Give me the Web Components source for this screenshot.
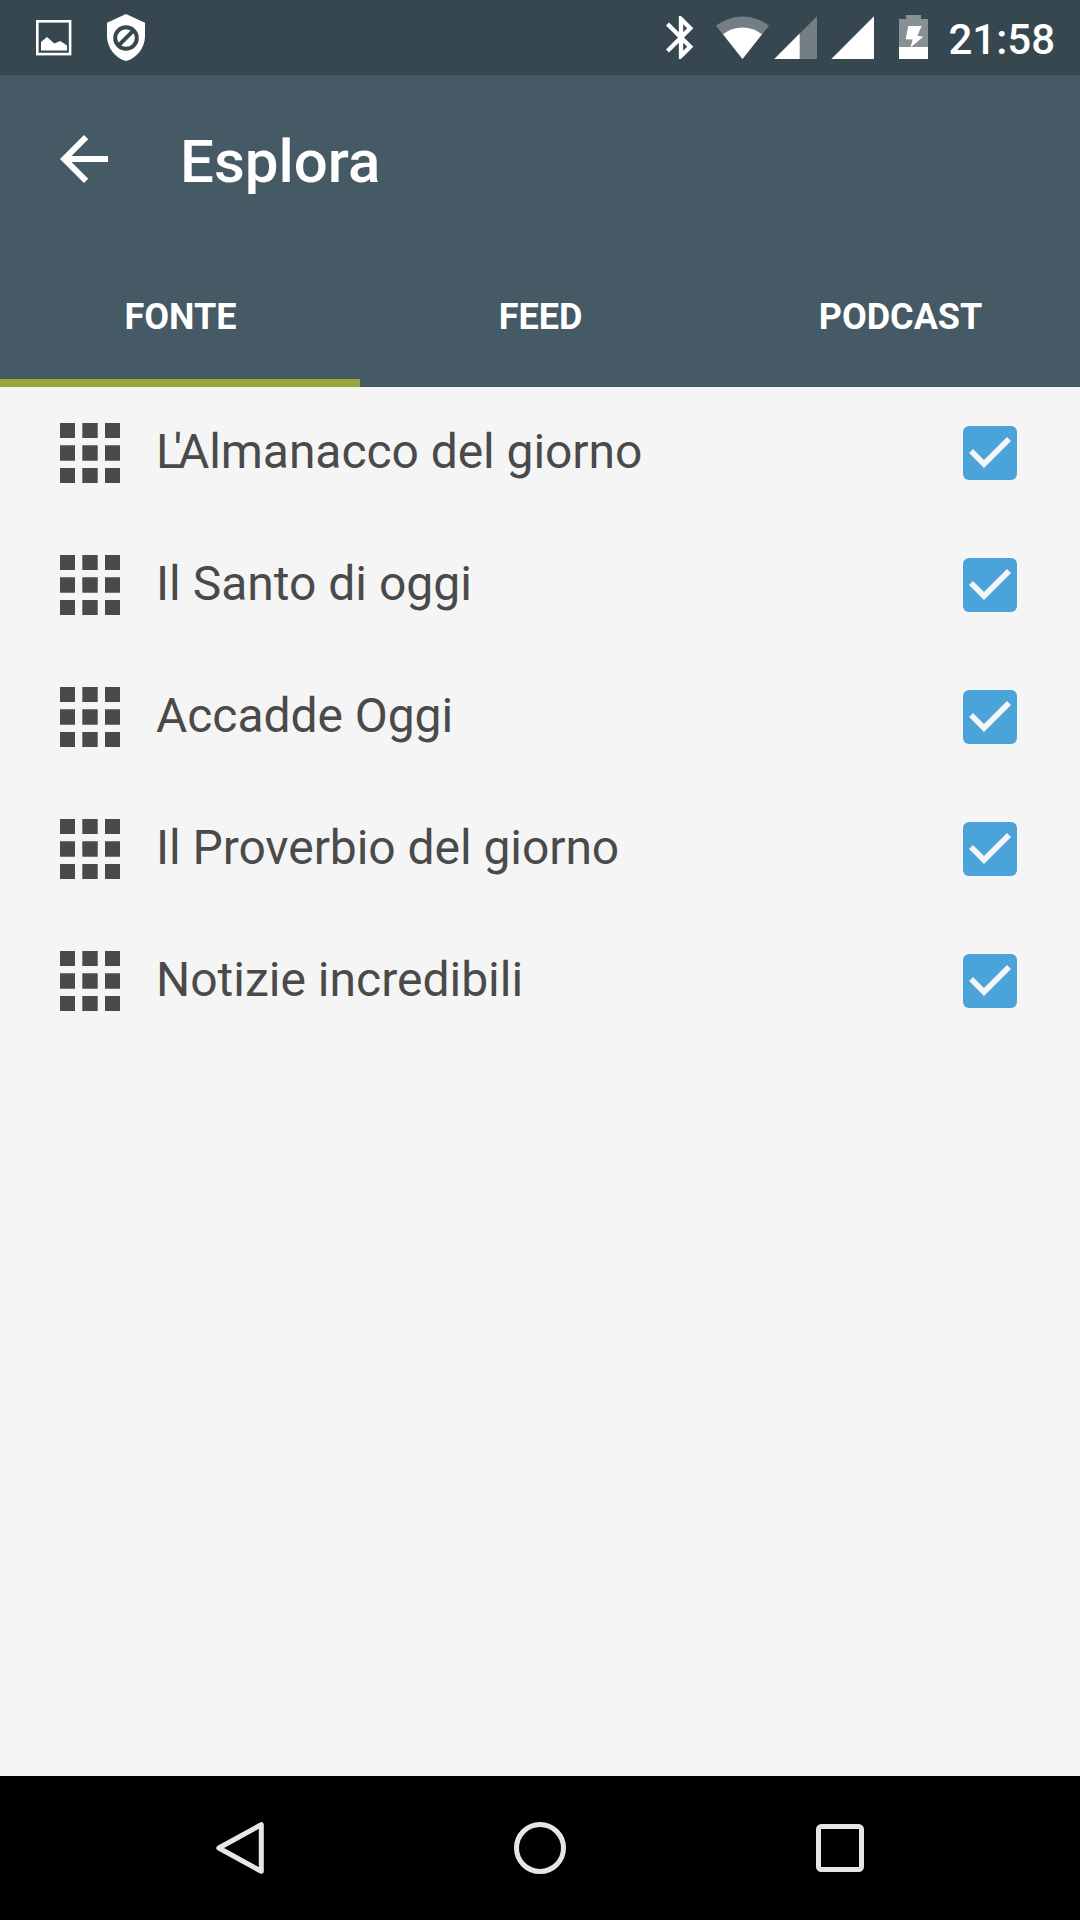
<!DOCTYPE html>
<html lang="it">
<head>
<meta charset="utf-8">
<title>Esplora</title>
<style>
html,body{margin:0;padding:0}
body{width:1080px;height:1920px;overflow:hidden;font-family:Roboto,sans-serif}
</style>
</head>
<body>
<explore-app></explore-app>
<script>
const define = (name, html) => customElements.define(name, class extends HTMLElement {
  constructor() {
    super();
    this.attachShadow({ mode: 'open' }).innerHTML = html;
  }
});

define('status-bar', `
<style>
:host{display:flex;align-items:center;height:75px;background:#37474f;color:#fff;box-sizing:border-box;padding:0 25px 0 36px}
svg{display:block;height:75px;flex:none;fill:#fff}
.left,.right{display:flex;align-items:center}
.left{gap:35px}
.right{margin-left:auto}
.dim{fill:#747f85}
.time{font-size:42px;font-weight:500;line-height:50px;padding-top:4px;margin-left:20px;white-space:nowrap}
</style>
<div class="left">
<svg width="36" viewBox="36 0 36 75"><rect x="37.3" y="21.3" width="32.8" height="32.8" fill="none" stroke="#fff" stroke-width="2.6"/><path d="M41 50.5V42L47 37L54.3 43.5L60.3 41L67 45.5V50.5Z"/></svg>
<svg width="38" viewBox="107 0 38 75"><path d="M126 14L145 22.7V36C145 48 136.500 58.300 126 61C115.500 58.300 107 48 107 36V22.700Z"/><g fill="none" stroke="#37474f" stroke-width="4"><circle cx="126" cy="38" r="10.800"/><path d="M118.400 45.600L133.600 30.400"/></g></svg>
</div>
<div class="right">
<svg width="28" viewBox="667 0 28 75"><path transform="translate(656.2 11.7) scale(2.15)" d="M17.71 7.71L12 2h-1v7.590L6.410 5 5 6.410 10.590 12 5 17.590 6.410 19 11 14.410V22h1l5.710-5.710-4.300-4.290 4.300-4.290zM13 5.830l1.880 1.880L13 9.590V5.830zm1.880 10.460L13 18.170v-3.760l1.880 1.880z"/></svg>
<svg style="margin-left:22px" width="54" viewBox="716 0 54 75"><path class="dim" d="M742.500 59L716 25.700A43 43 0 0 1 769 25.700Z"/><path d="M742.500 59L723 34.300A31.500 31.500 0 0 1 762 34.300Z"/></svg>
<svg style="margin-left:4px" width="43" viewBox="774 0 43 75"><path class="dim" d="M774.300 59L817 16.300V59Z"/><path d="M774.300 59L799.700 33.600V59Z"/></svg>
<svg style="margin-left:14px" width="43" viewBox="831 0 43 75"><path d="M831.300 59L874 16.300V59Z"/></svg>
<svg style="margin-left:25px" width="29" viewBox="899 0 29 75"><path fill="#879195" d="M899 19H906V15H921V19H928V47H899Z"/><path d="M899 47H928V59H899ZM908.300 26H921.700L917.300 35.700L923.300 36.700L910.500 47.500L912.700 39.500L905.700 39.300Z"/></svg>
<div class="time"><slot></slot></div>
</div>`);

define('tool-bar', `
<style>
:host{display:flex;align-items:center;height:168px;box-sizing:border-box;padding-left:48px;gap:60px}
svg{display:block;width:72px;height:72px;fill:#fff}
h1{margin:0;padding-top:5px;font-size:60px;font-weight:500;line-height:70px;color:#fff}
</style>
<svg viewBox="0 0 24 24"><path d="M20 11H7.830l5.590-5.590L12 4l-8 8 8 8 1.410-1.410L7.830 13H20v-2z"/></svg>
<h1><slot></slot></h1>`);

define('tab-item', `
<style>
:host{flex:1;display:flex;align-items:center;justify-content:center;height:144px;box-sizing:border-box;padding:11px 0 0 1px;border-bottom:8px solid transparent;color:#fff;font-size:36px;font-weight:700;line-height:42px}
:host([selected]){border-color:#96a93a}
</style>
<slot></slot>`);

define('tab-strip', `
<style>:host{display:flex}</style>
<slot></slot>`);

define('source-row', `
<style>
:host{display:flex;align-items:center;height:132px;box-sizing:border-box;padding:0 63px 0 60px;color:#4a4a4a}
svg{display:block;flex:none}
.label{flex:1;margin-left:36px;padding-bottom:3px;font-size:48px;line-height:56px;white-space:nowrap}
</style>
<svg width="60" height="60" fill="#4a4a4a"><path d="M0 0h15v15H0zM22.300 0h15.400v15H22.300zM45 0h15v15H45zM0 22.300h15v15.400H0zM22.300 22.300h15.400v15.400H22.300zM45 22.300h15v15.400H45zM0 45h15v15H0zM22.300 45h15.400v15H22.300zM45 45h15v15H45z"/></svg>
<div class="label"><slot></slot></div>
<svg width="54" height="54"><rect width="54" height="54" rx="6" fill="#4aa4d9"/><path fill="#f5f5f5" d="M6.100 27L10 23L21 33.900L44 10.900L48 14.900L21 42Z"/></svg>`);

define('nav-bar', `
<style>
:host{display:grid;grid-template-columns:repeat(3,300px);justify-content:center;place-items:center;height:144px;background:#000}
svg{display:block;fill:none;stroke:#e6e6e6;stroke-width:5;stroke-linejoin:round}
</style>
<svg width="48" height="52"><path d="M2.800 26L45.300 2.700V49.300Z"/></svg>
<svg width="52" height="52"><circle cx="26" cy="26" r="23.500"/></svg>
<svg width="48" height="48"><rect x="2.500" y="2.500" width="43" height="43" rx="2.800"/></svg>`);

define('explore-app', `
<style>
:host{display:flex;flex-direction:column;width:1080px;height:1920px;background:#f5f5f5}
header{background:#455a64}
main{flex:1}
.snug{letter-spacing:-.06px}
.kern-l{letter-spacing:-8px}
.kern-q{letter-spacing:-4.300px}
</style>
<status-bar>21:58</status-bar>
<header>
<tool-bar>Esplora</tool-bar>
<tab-strip><tab-item selected>FONTE</tab-item><tab-item>FEED</tab-item><tab-item>PODCAST</tab-item></tab-strip>
</header>
<main>
<source-row class="snug"><span class="kern-l">L</span><span class="kern-q">'</span>Almanacco del giorno</source-row>
<source-row>Il Santo di oggi</source-row>
<source-row class="snug">Accadde Oggi</source-row>
<source-row class="snug">Il Proverbio del giorno</source-row>
<source-row>Notizie incredibili</source-row>
</main>
<nav-bar></nav-bar>`);
</script>
</body>
</html>
